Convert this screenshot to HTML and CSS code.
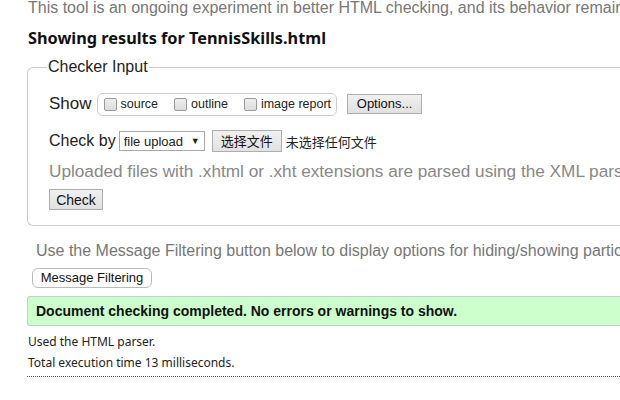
FILE: index.html
```html
<!DOCTYPE html>
<html>
<head>
<meta charset="utf-8">
<link rel="stylesheet" href="styles.css">
</head>
<body>
<div class="page">
  <p class="intro">This tool is an ongoing experiment in better HTML checking, and its behavior remains subject to change</p>
  <h2 class="title">Showing results for TennisSkills.html</h2>
  <fieldset class="checker">
    <legend>Checker Input</legend>
    <div class="row show-row">
      <span class="label">Show</span>
      <span class="opts">
        <label class="opt"><span class="cb"></span>source</label>
        <label class="opt"><span class="cb"></span>outline</label>
        <label class="opt"><span class="cb"></span>image report</label>
      </span>
      <button class="btn options">Options...</button>
    </div>
    <div class="row check-row">
      <span class="label">Check by</span>
      <span class="select">file upload <span class="arrow">▼</span></span>
      <button class="btn file">选择文件</button>
      <span class="nofile">未选择任何文件</span>
    </div>
    <p class="hint">Uploaded files with .xhtml or .xht extensions are parsed using the XML parser.</p>
    <button class="btn check">Check</button>
  </fieldset>
  <p class="filter-note">Use the Message Filtering button below to display options for hiding/showing particular messages.</p>
  <button class="btn filter">Message Filtering</button>
  <div class="success">Document checking completed. No errors or warnings to show.</div>
  <p class="meta first">Used the HTML parser.</p>
  <p class="meta">Total execution time 13 milliseconds.</p>
  <div class="rule"></div>
</div>
</body>
</html>
```
FILE: styles.css
```css
html, body {
  margin: 0;
  padding: 0;
  background: #fff;
  overflow: hidden;
}
.page {
  width: 592px;
  padding: 0 0 0 28px;
  font-family: "Liberation Sans", Arial, sans-serif;
  color: #222;
}
.intro {
  margin: 0;
  font-size: 16px;
  line-height: 16px;
  color: #777;
  white-space: nowrap;
  overflow: hidden;
}
.title {
  margin: 12px 0 0 0;
  font-family: "Noto Sans", sans-serif;
  font-size: 16.3px;
  font-weight: bold;
  line-height: 20px;
  color: #111;
}
.checker {
  box-sizing: border-box;
  margin: 10px 0 0 -1px;
  border: 1px solid #ccc;
  border-right: 0;
  border-radius: 6px 0 0 6px;
  padding: 4px 0 15px 21px;
  width: 593px;
  min-width: 0;
  overflow: hidden;
}
.checker legend {
  font-size: 16px;
  color: #222;
  padding: 0 1px;
  margin-left: -2px;
}
.row {
  display: flex;
  align-items: center;
  white-space: nowrap;
}
.show-row {
  margin-top: 12px;
  height: 24px;
}
.label {
  font-size: 17px;
  color: #222;
  margin-right: 5px;
}
.opts {
  display: flex;
  align-items: center;
  border: 1px solid #ccc;
  border-radius: 6px;
  height: 21px;
  padding: 0 5px 0 6px;
  gap: 16px;
}
.opt {
  display: flex;
  align-items: center;
  font-size: 12.5px;
  color: #222;
}
.cb {
  display: inline-block;
  width: 11px;
  height: 11px;
  border: 1px solid #999;
  border-radius: 2px;
  background: linear-gradient(#eee, #ddd);
  margin-right: 4px;
}
.btn {
  font-family: "Liberation Sans", Arial, sans-serif;
  font-size: 13px;
  color: #111;
  border: 1px solid #adadad;
  border-radius: 0;
  background: linear-gradient(#f0f0f0, #e1e1e1);
  padding: 0 6px;
  height: 20px;
  line-height: 18px;
}
.options {
  margin-left: 10px;
  padding: 0 6px;
  width: 75px;
}
.check-row {
  margin-top: 14px;
  height: 22px;
}
.check-row .label {
  font-size: 16px;
  margin-right: 3px;
}
.select {
  display: inline-flex;
  align-items: center;
  border: 1px solid #a9a9a9;
  height: 18px;
  font-size: 13px;
  padding: 0 4px;
  width: 76px;
  justify-content: space-between;
}
.arrow {
  font-size: 9px;
}
.file {
  margin-left: 7px;
  height: 22px;
  width: 70px;
  padding: 0;
  font-family: "Noto Sans CJK SC", sans-serif;
  font-size: 13px;
}
.nofile {
  margin-left: 4px;
  font-family: "Noto Sans CJK SC", sans-serif;
  font-size: 13px;
  color: #222;
}
.hint {
  margin: 7px 0 0 0;
  font-size: 17.2px;
  line-height: 24px;
  color: #888;
  white-space: nowrap;
  overflow: hidden;
}
.check {
  display: block;
  margin-top: 6px;
  width: 54px;
  height: 21px;
  font-size: 14px;
}
.filter-note {
  margin: 16px 0 0 8px;
  font-size: 16px;
  line-height: 18px;
  color: #777;
  white-space: nowrap;
  overflow: hidden;
}
.filter {
  display: block;
  margin: 8px 0 0 4px;
  height: 20px;
  width: 120px;
  border: 1px solid #bbb;
  border-radius: 6px;
  background: #fff;
  font-size: 13px;
  padding: 0;
}
.success {
  box-sizing: border-box;
  margin-top: 8px;
  margin-left: -1px;
  width: 593px;
  background: #ccffcc;
  border: 1px solid #ccc;
  border-right: 0;
  border-radius: 3px 0 0 3px;
  padding: 0 8px;
  height: 30px;
  line-height: 28px;
  font-weight: bold;
  font-size: 14px;
  color: #111;
  white-space: nowrap;
  overflow: hidden;
}
.meta {
  margin: 0;
  font-family: "Noto Sans", sans-serif;
  font-size: 12px;
  line-height: 21px;
  color: #222;
}
.meta.first {
  margin-top: 5px;
}
.rule {
  margin-top: 3px;
  margin-left: -1px;
  border-top: 1px dotted #555;
  width: 593px;
}
```
